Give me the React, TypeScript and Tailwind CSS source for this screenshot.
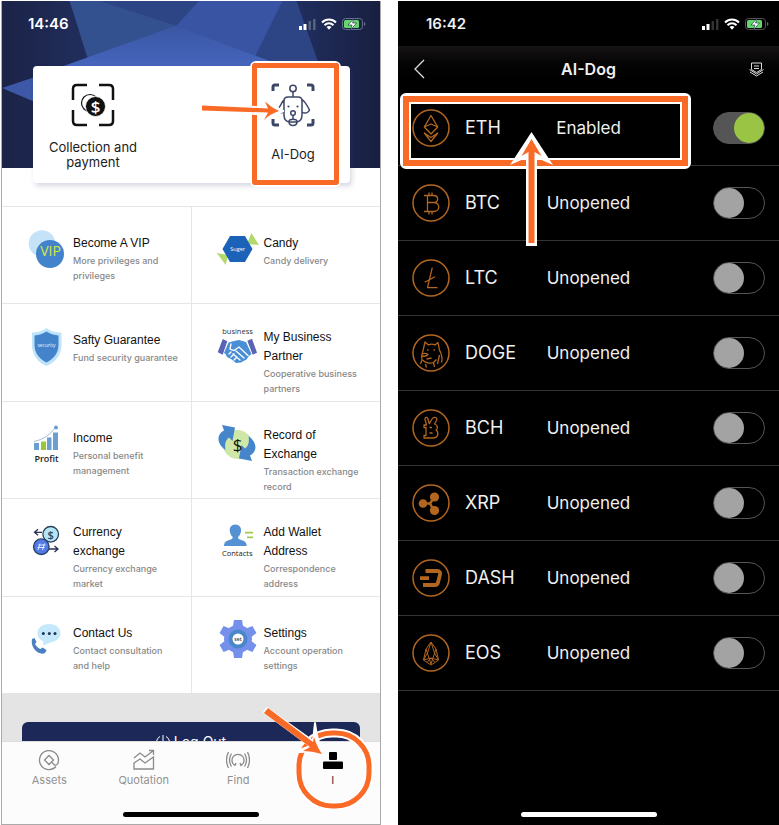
import React from 'react';

interface MenuItem {
  title: string;
  text: string;
  icon: React.ReactElement;
}

const iconFont = 'font-["Open_Sans",sans-serif]';

// Icons of the account menu, all on a 44x46 canvas
const VipIcon = () => (
  <>
    <circle cx="17" cy="15.5" r="13.3" fill="#c4e3f8" />
    <circle cx="25" cy="26" r="14" fill="#4283cb" />
    <text x="25.5" y="28" textAnchor="middle" fontSize="14" fill="#d4e93c" className={iconFont}>VIP</text>
  </>
);

const CandyIcon = () => (
  <>
    <path d="M35.3 5 43 17 31 16ZM.7 25 12 27 9.7 37Z" fill="#b3d96c" />
    <path d="M6.5 21 14 8h15l7.5 13L29 34H14Z" fill="#1c62b9" />
    <text x="21.7" y="23" textAnchor="middle" fontSize="5.5" fill="#fff" className={iconFont}>Suger</text>
  </>
);

const ShieldIcon = () => (
  <>
    <path d="M21.5 3C18 6 12 7.5 7 7.5V20c0 11 7 18 14.500 21C29 38 36.500 31 36.500 20V7.500C31 7.500 25 6 21.500 3Z" fill="#bfe3f8" />
    <path d="M21.500 6.500C18 9 14 10 9.500 10.500V20c0 9 6 14.500 12 17.500 6-3 12-8.500 12-17.500v-9.500C29 10 25 9 21.500 6.500Z" fill="#4283cb" />
    <text x="21.500" y="21.500" textAnchor="middle" fontSize="5" fill="#e7f3ff" className={iconFont}>security</text>
  </>
);

const BusinessIcon = () => (
  <>
    <text x="21.500" y="10" textAnchor="middle" fontSize="7.500" fill="#333" className={iconFont}>business</text>
    <path d="m6.700 15 4.600 2.300-4.600 13.400-5-2.400ZM31.300 16.700 36 14.700l5 14-4.300 2Z" fill="#5a63b4" />
    <path d="M12.500 18.500 18 17l5-1 7 2 5.500 12-3 2.500-2 3-3 1.500-2.500 1.500L20 39l-5-4-4-2-1.500-3-1.500-1Z" fill="#4a8fd6" />
    <path d="m15 20-1 5 4 1.500 5-3.500 9 8.500M20 27l8 7M17 30l7 6M13 30l2-2m0 5 3-3m0 6 3-3" fill="none" stroke="#fff" strokeWidth="1.300" strokeLinecap="round" />
  </>
);

const IncomeIcon = () => (
  <>
    <path d="M9 20h5v7H9ZM22 14.500h4.500V27H22ZM28 9.500h5V27h-5Z" fill="#6b9fd2" />
    <path d="M16 18.500h5V27h-5Z" fill="#97c83c" />
    <path d="M9 18.500Q22 16 30 5" fill="none" stroke="#9dbfe2" strokeWidth="1" />
    <circle cx="31" cy="4.500" r="2" fill="#6b9fd2" />
    <text x="21.500" y="38.500" textAnchor="middle" fontSize="9" fontWeight="600" fill="#222" className={iconFont}>Profit</text>
  </>
);

const RecordIcon = () => (
  <>
    <circle cx="21.500" cy="22.500" r="14.500" fill="#cfe8a8" />
    <path d="M6 3 19 5.500 16.500 19l-3.500-3.500C9.500 18 8.500 22 9.500 28 0 21 1 12 8 8.500Z" fill="#4585cb" />
    <path d="M6 3 19 5.500 16.500 19l-3.500-3.500C9.500 18 8.500 22 9.500 28 0 21 1 12 8 8.500Z" fill="#4585cb" transform="rotate(180 21 21)" />
    <text x="21.500" y="28.500" textAnchor="middle" fontSize="17" fill="#111" className={iconFont}>$</text>
  </>
);

const CurrencyIcon = () => (
  <>
    <path d="M17 13.300H10m3-3-3.500 3 3.500 3M24 30h8.500m-3-3 3.500 3-3.500 3" fill="none" stroke="#2b3052" strokeWidth="1.300" />
    <circle cx="25.700" cy="15.300" r="7.800" fill="#b4e6f6" stroke="#2b4059" strokeWidth="1.300" />
    <circle cx="16.300" cy="27.700" r="7.800" fill="#527be5" stroke="#2b3f6b" strokeWidth="1.300" />
    <path d="m15 24.500-2 6.500m6.500-6.500-2 6.500m-5-2.500h7m-6-2.500h7" fill="none" stroke="#dfe8ff" strokeWidth="1" />
    <text x="25.700" y="19.500" textAnchor="middle" fontSize="11" fontWeight="600" fill="#234a64" className={iconFont}>$</text>
  </>
);

const ContactsIcon = () => (
  <>
    <path d="M19.300 5.500c-4 0-6 3-5.500 6.500.3 3 1.500 5 3 6 0 2-2 2.500-5 3.500-2.500 1-3.800 2.500-3.800 5.500h22.700c0-3-1.500-4.500-4-5.500-3-1-4.700-1.500-4.700-3.500 1.500-1 2.700-3 3-6 .500-3.500-1.700-6.500-5.700-6.500Z" fill="#5592d4" />
    <path d="M29 13.700h8M31 18.300h6" stroke="#9dc94e" strokeWidth="1.800" />
    <text x="21.300" y="37" textAnchor="middle" fontSize="7.500" fill="#222" className={iconFont}>Contacts</text>
  </>
);

const ContactUsIcon = () => (
  <>
    <path d="M24 6c7 0 11.500 4 11.500 9.300 0 4.700-4.500 8.700-10 9.200L18 27.500l.500-4c-4-1.500-6-4.500-6-8.200C12.500 10 17 6 24 6Z" fill="#c5e9fb" />
    <circle cx="18.300" cy="15.500" r="1.500" fill="#1d3454" />
    <circle cx="24.300" cy="15.500" r="1.500" fill="#1d3454" />
    <circle cx="30" cy="15.500" r="1.500" fill="#1d3454" />
    <path d="m7 21 2.500-1 2 4-1.500 2c1.500 2.500 3 4 5.500 5l2-1.500 4 2.500-1.500 3c-6 3-15-5-13-14Z" fill="#4a80c2" />
  </>
);

const GearIcon = () => (
  <>
    <g fill="#7590ea">
      <circle cx="22" cy="21" r="14" />
      <path d="M18 2h8l1 6H17ZM18 40h8l1-6H17Z" />
      <path d="M18 2h8l1 6H17ZM18 40h8l1-6H17Z" transform="rotate(60 22 21)" />
      <path d="M18 2h8l1 6H17ZM18 40h8l1-6H17Z" transform="rotate(120 22 21)" />
    </g>
    <circle cx="22" cy="21" r="7.500" fill="#fff" stroke="#4987c9" strokeWidth="4" />
    <text x="22" y="22.500" textAnchor="middle" fontSize="5" fontWeight="600" fill="#333" className={iconFont}>set</text>
  </>
);

const menuItems: MenuItem[] = [
  { title: 'Become A VIP', text: 'More privileges and\nprivileges', icon: <VipIcon /> },
  { title: 'Candy', text: 'Candy delivery', icon: <CandyIcon /> },
  { title: 'Safty Guarantee', text: 'Fund security guarantee', icon: <ShieldIcon /> },
  { title: 'My Business\nPartner', text: 'Cooperative business\npartners', icon: <BusinessIcon /> },
  { title: 'Income', text: 'Personal benefit\nmanagement', icon: <IncomeIcon /> },
  { title: 'Record of\nExchange', text: 'Transaction exchange\nrecord', icon: <RecordIcon /> },
  { title: 'Currency\nexchange', text: 'Currency exchange\nmarket', icon: <CurrencyIcon /> },
  { title: 'Add Wallet\nAddress', text: 'Correspondence\naddress', icon: <ContactsIcon /> },
  { title: 'Contact Us', text: 'Contact consultation\nand help', icon: <ContactUsIcon /> },
  { title: 'Settings', text: 'Account operation\nsettings', icon: <GearIcon /> },
];

// Coin logos, drawn inside a 38x38 ring
const coins = [
  {
    name: 'ETH',
    enabled: true,
    logo: <path d="M19 6.500 12.300 18 19 25l6.700-7ZM12.300 18l6.700-3 6.700 3M12.300 24 19 32.500 25.700 24 19 28.500Z" />,
  },
  {
    name: 'BTC',
    logo: <path d="M12 11.500h9.500c5.500 0 5.500 7 0 7H15.500m6 0c7 0 7 9 0 9H12m3.500-16v16M17 8.500v3m3-3v3m-3 16v3m3-3v3" />,
  },
  { name: 'LTC', logo: <path d="M20.300 8.700 15.500 28.700h10M12.700 23.300 23 17.700" /> },
  {
    name: 'DOGE',
    logo: (
      <path d="M10 26c-1-3-.5-5 .5-7.500C11.500 15 12 12 13 8l3.500 3c2-1 4.500-1 6.500 0l3-2.500c.5 3 1 5 1.500 7.500 2.500 5 3 9 2 12.500M10.500 20c2-1 4-.5 5.500.500-1.500 2-3.500 2-5.500 1.500m0 4c3 3 8 4 11 2.500l3-3M10 26l-1.500 4m5 0 1 3.500m7-5 1 4.500m5-12-2 9m-10.500-14h1.500m5 0h1.500m-8.500 9 5-1" />
    ),
  },
  {
    name: 'BCH',
    logo: (
      <path d="M12 16h2.500L13 10.500c-.5-2.500 2.500-3 3-.500l1 4 .500.500 2.500-4.500c2-3 6-1.500 4.500 1.500L22.500 15c3.500 1 3.500 4.500 1.500 6 3 2 2.500 8-3 8H12v-2.500h2v-8h-2ZM17.500 18.500h2.500m-2.500 5.500h3" />
    ),
  },
  {
    name: 'XRP',
    logo: (
      <>
        <path d="M12 19.500h6l4-6m-4 6 4 7" strokeWidth="2.500" />
        <g fill="#b2661f" stroke="none">
          <circle cx="11" cy="19.500" r="4.300" />
          <circle cx="22.500" cy="13" r="4.600" />
          <circle cx="22.500" cy="26.500" r="4.600" />
        </g>
      </>
    ),
  },
  {
    name: 'DASH',
    logo: <path d="M13.500 12h12c2 0 3 1.500 2.500 3.500l-2 8c-.5 2-1.500 2.500-3 2.500H11M8 19.200h9" strokeWidth="3.800" />,
  },
  {
    name: 'EOS',
    logo: <path d="m19 8-5 7-2.500 11L19 31l7.500-5L24 15ZM14 15l5 15 5-15M19 8l-3.500 11 -4 7 7.500-2 7.500 2-4-7ZM15.500 28 19 24l3.500 4" strokeWidth="1" />,
  },
];

const SignalIcons = ({ dark = false }: { dark?: boolean }) => (
  <svg className="h-4 w-[70px]" viewBox="0 0 70 16" aria-hidden="true">
    <path d="M1 10h3v4H1ZM5.500 8h3v6h-3Z" fill="#fff" />
    <path d="M10.500 5h2.500v9h-2.500ZM15 3h2.500v11H15Z" fill={dark ? '#333' : '#56627f'} />
    <path d="M24 6.500c4-4 10-4 14 0M26.500 9.200c2.600-2.600 6.400-2.600 9 0" fill="none" stroke="#fff" strokeWidth="2" />
    <path d="M28.500 11q2.500-2 5 0L31 13.800Z" fill="#fff" />
    <rect x="44.500" y="2.500" width="20" height="11" rx="3" fill="none" stroke={dark ? '#555' : '#66708c'} />
    <path d="M66 6v4q3-2 0-4Z" fill="#66708c" />
    <rect x="46" y="4" width="15" height="8" rx="1.500" fill="#65d66c" />
    <path d="m56 2.500-6 6.500h4l-1.500 5 6-7h-4Z" fill="#fff" stroke="#162044" strokeWidth=".6" />
  </svg>
);

const tabs = [
  {
    label: 'Assets',
    icon: (
      <>
        <path d="M19 18.500A9.500 9.500 0 1 1 21.500 12c0 4-1.500 5.500-4 5l-3-3" />
        <path d="m12 7.500 4.500 4.500-4.500 4.500L7.500 12Z" />
      </>
    ),
  },
  {
    label: 'Quotation',
    icon: <path d="m2 10 6-5 5 4 8-6m-4-.500h4.500V7M2 15l6-4 5 4 8.500-6v12H2Z" />,
  },
  {
    label: 'Find',
    icon: <path d="M9 17.500a6 6 0 1 1 6 0l-1-2.500m-8.500-9.500q-4 6.500 0 13M18.500 5.500q4 6.500 0 13M2.500 4q-4 8 0 16M21.500 4q4 8 0 16M9 17.500l1-2.500" />,
  },
];

function WalletScreen() {
  return (
    <section className="flex flex-col border border-t-0 border-[#aaa] bg-white font-[Inter,sans-serif]">
      <header className="relative pb-[23px]">
        <svg className="absolute inset-x-0 top-0 h-[167px] w-full" viewBox="0 0 380 167" preserveAspectRatio="none" aria-hidden="true">
          <defs>
            <linearGradient id="sky">
              <stop offset="0" stopColor="#1b2346" />
              <stop offset=".55" stopColor="#293d7e" />
              <stop offset="1" stopColor="#181f40" />
            </linearGradient>
            <linearGradient id="beam" x2="0" y2="1">
              <stop offset="0" stopColor="#3a56a4" />
              <stop offset="1" stopColor="#4666bd" />
            </linearGradient>
          </defs>
          <path d="M0 0h380v167H0Z" fill="url(#sky)" />
          <path d="M68 0h228l24 67H94Z" fill="#2e4585" />
          <path d="M68 0h30l78 25-90 32Z" fill="#33508f" />
          <path d="M198 0h84l-28 56-80-30Z" fill="#3854a2" />
          <path d="m62 65 112-40 98 36v6H62Z" fill="url(#beam)" />
          <path d="m0 87 66-22v50Z" fill="#3c58a6" />
        </svg>
        <div className="relative flex h-[65px] items-start justify-between pt-[11px] pr-3 pl-[26px] text-white">
          <span className="text-[15px] leading-6 font-semibold">14:46</span>
          <div className="pt-1">
            <SignalIcons />
          </div>
        </div>
        <div className="relative mr-[30px] ml-[31px] flex h-[117px] justify-between rounded bg-white text-[13px] leading-[15px] text-[#1c1c1c] shadow-[2px_3px_5px_rgba(60,60,120,0.2)]">
          <button className="flex w-[120px] flex-col items-center gap-[13px] pt-[17px]">
            <svg className="size-11" viewBox="0 0 44 44" fill="none" stroke="#111" strokeWidth="2.500" aria-hidden="true">
              <path d="M2 17V6q0-4 4-4h10M28 2h10q4 0 4 4v11M42 27v11q0 4-4 4H28M16 42H6q-4 0-4-4V27" />
              <circle cx="19" cy="20" r="8.500" strokeWidth="1.200" />
              <circle cx="24.500" cy="23.500" r="10" fill="#111" stroke="#fff" strokeWidth=".800" />
              <text x="24.500" y="29.500" textAnchor="middle" fontSize="17" fontWeight="600" fill="#fff" stroke="none" className={iconFont}>$</text>
            </svg>
            <span>
              Collection and
              <br />
              payment
            </span>
          </button>
          <button className="relative flex w-[114px] flex-col items-center gap-5 pt-[17px]">
            <svg className="size-11" viewBox="0 0 44 44" fill="none" stroke="#3c4668" strokeWidth="1.500" strokeLinejoin="round" aria-hidden="true">
              <path d="M2 8V4q0-2 2-2h4M36 2h4q2 0 2 2v4M42 36v4q0 2-2 2h-4M8 42H4q-2 0-2-2v-4" strokeWidth="3" />
              <circle cx="22" cy="5.500" r="3.200" />
              <path d="M22 8.700V14M17 14h10q4 0 4 4v14q0 6-5 7h-8q-5-1-5-7V18q0-4 4-4ZM13.500 16c-3 3.500-4.500 7-6.500 11 1.500 3 4 3 6 2M30.500 16c4 3 6 7 8 11-1 3-4.500 4-7.500 2M22 32v5M18 38.500c0-3 8-3 8 0s-1.500 4-4 4-4-1-4-4Z" />
              <circle cx="22" cy="30" r="2.300" />
              <circle cx="17.500" cy="23.500" r="1.100" fill="#3c4668" stroke="none" />
              <circle cx="26.500" cy="23.500" r="1.100" fill="#3c4668" stroke="none" />
            </svg>
            <span>AI-Dog</span>
            <span className="absolute -top-[5px] right-[9px] -bottom-1 left-3.5 rounded-md border-2 border-white">
              <span className="block h-full rounded-[3px] border-[5px] border-[#f96a27]" />
            </span>
            <svg className="absolute top-[26px] -left-[36px] h-10 w-[84px]" viewBox="0 0 84 40" aria-hidden="true">
              <path d="M2 13.500 66 16.500 63 4q7 10 18 15-11 4-20 15l5-12.500L2 18.500Z" fill="#fff" stroke="#fff" strokeWidth="4" />
              <path d="M2 13.500 68 16.500 65 9.500q6 6 14 9.500-9 3-15 9l4-7.500L2 18.500Z" fill="#f96a27" />
            </svg>
          </button>
        </div>
      </header>

      <div className="grid min-h-[487px] auto-rows-fr grid-cols-2 gap-px border-t border-[#e6e6e6] bg-[#e6e6e6]">
        {menuItems.map(item => (
          <a key={item.title} href="#" className={`flex gap-1 bg-white pl-[23px] even:pl-6 ${item.title.includes('\n') ? 'pt-6' : 'pt-[27px]'}`}>
            <svg className={`h-[46px] w-11 shrink-0 ${item.title.includes('\n') ? '-mt-1' : '-mt-1.5'}`} viewBox="0 0 44 46" aria-hidden="true">
              {item.icon}
            </svg>
            <span className="whitespace-pre-line">
              <span className="block font-['Liberation_Sans',sans-serif] text-xs leading-[19px] text-[#111]">{item.title}</span>
              <span className="block text-[9px] leading-[15px] font-medium text-[#888]">{item.text}</span>
            </span>
          </a>
        ))}
      </div>

      <div className="h-12 overflow-hidden bg-[#e4e4e4] px-5 pt-[29px]">
        <button className="flex h-10 w-full items-center justify-center gap-1 rounded-md bg-[#1c2858] text-sm text-white">
          <svg className="size-3.5" viewBox="0 0 14 14" fill="none" stroke="currentColor" aria-hidden="true">
            <path d="M4 1.500a6.500 6.500 0 1 0 6 0M7 0v6" />
          </svg>
          Log Out
        </button>
      </div>

      <footer className="flex grow flex-col border-t border-[#ddd] bg-[#fcfcfc]">
        <nav className="grid grow grid-cols-4 text-[11px] leading-4 text-[#929292]">
          {tabs.map(tab => (
            <a key={tab.label} href="#" className="flex flex-col items-center pt-1.5">
              <svg className="size-6" viewBox="0 0 24 24" fill="none" stroke="#8a8a8a" strokeWidth="1.300" aria-hidden="true">
                {tab.icon}
              </svg>
              {tab.label}
            </a>
          ))}
          <a href="#" className="relative flex flex-col items-center pt-1.5 text-[#333]">
            <svg className="size-6" viewBox="0 0 24 24" aria-hidden="true">
              <rect x="8" y="4" width="8" height="8" rx="1" />
              <rect x="2" y="13.500" width="20" height="7.500" rx="1" />
            </svg>
            I
            <svg className="absolute -top-[42px] -left-[31px] h-[125px] w-[130px]" viewBox="0 0 130 125" fill="none" aria-hidden="true">
              <rect x="44" y="33" width="70" height="73" rx="33" stroke="#fff" strokeWidth="9" />
              <rect x="44" y="33" width="70" height="73" rx="33" stroke="#f96a27" strokeWidth="5" />
              <path d="m12 8 46 33 2-18q2 17 8 31-15-4-30-1l17-7L9 12Z" fill="#fff" stroke="#fff" strokeWidth="2" strokeLinejoin="round" />
              <path d="m13 8 45 34 1-5q3 10 8 17-10-3-19-3l7-4L9 13Z" fill="#f96a27" />
            </svg>
          </a>
        </nav>
        <div className="mx-auto mb-[7px] h-[5px] w-[136px] rounded-full bg-black" />
      </footer>
    </section>
  );
}

function DogScreen() {
  return (
    <section className="flex flex-col bg-black font-[Inter,sans-serif] text-[#f0f0f0]">
      <div className="flex h-[45px] items-start justify-between pt-[11px] pr-2 pl-7">
        <span className="text-[15px] leading-6 font-semibold">16:42</span>
        <div className="pt-1">
          <SignalIcons dark />
        </div>
      </div>
      <header className="grid h-[45px] grid-cols-[1fr_auto_1fr] items-center bg-linear-to-b from-[#161414] to-black px-[15px]">
        <button aria-label="Back" className="justify-self-start">
          <svg className="h-5 w-3" viewBox="0 0 12 20" fill="none" stroke="#ddd" strokeWidth="1.300" aria-hidden="true">
            <path d="M11 1 2 10l9 9" />
          </svg>
        </button>
        <h1 className="text-base font-semibold">AI-Dog</h1>
        <button aria-label="Records" className="justify-self-end">
          <svg className="h-4 w-[15px]" viewBox="0 0 15 16" fill="none" stroke="#ddd" strokeWidth="1" aria-hidden="true">
            <path d="M2.500 2h10v6.500l-5 3-5-3ZM5 5h5M5 7.500h5M.5 8.500l7 4.500 7-4.500M1 11l6.500 4 6.500-4" />
          </svg>
        </button>
      </header>
      <ul>
        {coins.map(coin => (
          <li key={coin.name} className="relative grid h-[75px] grid-cols-[1fr_auto_1fr] items-center border-b border-[#333] pr-3.5 pl-3.5">
            <label htmlFor={coin.name} className="flex items-center gap-[15px] text-lg">
              <svg className="size-[38px]" viewBox="0 0 38 38" fill="none" stroke="#b2661f" strokeWidth="1.300" strokeLinejoin="round" aria-hidden="true">
                <circle cx="19" cy="19" r="18" strokeWidth="1.500" />
                {coin.logo}
              </svg>
              {coin.name}
            </label>
            <span className="pt-0.5 text-[17px]">{coin.enabled ? 'Enabled' : 'Unopened'}</span>
            <input
              id={coin.name}
              type="checkbox"
              role="switch"
              defaultChecked={coin.enabled}
              className="flex h-8 w-[52px] appearance-none items-center justify-self-end rounded-full border border-[#555] before:size-[30px] before:rounded-full before:bg-[#a3a3a3] checked:justify-end checked:bg-[#555] checked:before:bg-[#9ac544]"
            />
            {coin.enabled && (
              <>
                <span className="absolute top-0.5 right-[88px] -bottom-1 left-0.5 rounded-md border-[3px] border-white">
                  <span className="block h-full border-[6px] border-[#f96a27]">
                    <span className="block h-full border-2 border-white" />
                  </span>
                </span>
                <svg className="absolute top-10 left-[111px] z-10 h-[116px] w-[45px]" viewBox="0 0 45 116" aria-hidden="true">
                  <path d="M22.500 1 44 34l-16-7v88H17V27L1 34Z" fill="#fff" />
                  <path d="m22.500 8 10 17-7-4v91h-6V21l-7 4Z" fill="#f96a27" />
                </svg>
              </>
            )}
          </li>
        ))}
      </ul>
      <div className="mx-auto mt-auto mb-2 h-[5px] w-[136px] rounded-full bg-white" />
    </section>
  );
}

export default function App(): React.ReactElement {
  return (
    <main className="grid min-h-screen grid-cols-[380fr_381fr] gap-x-[17px] bg-white pt-px pl-px">
      <WalletScreen />
      <DogScreen />
    </main>
  );
}
